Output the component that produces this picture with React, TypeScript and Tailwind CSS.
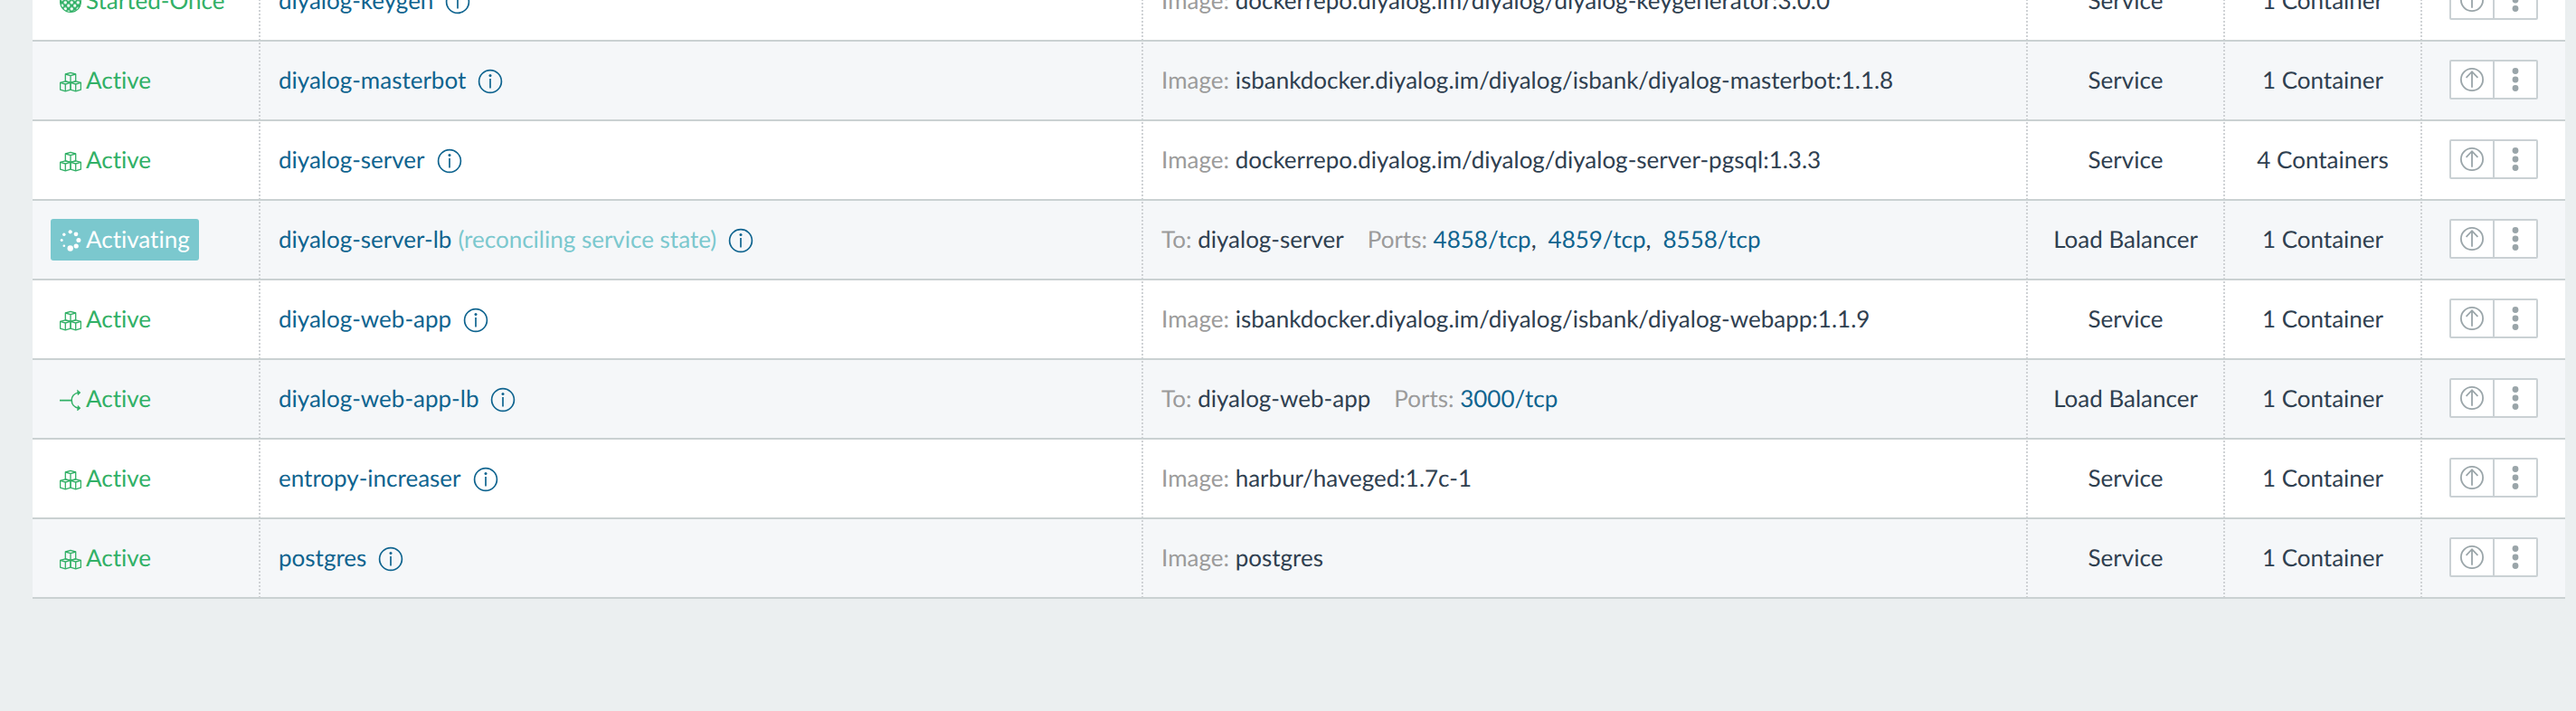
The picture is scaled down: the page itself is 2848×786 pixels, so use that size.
import React from "react";

type Status = "started" | "active" | "activating" | "balancer";

interface Row {
  status: Status;
  label: string;
  name: string;
  note?: string;
  image?: string;
  to?: string;
  ports?: string[];
  kind: string;
  scale: string;
}

const rows: Row[] = [
  { status: "started", label: "Started-Once", name: "diyalog-keygen", image: "dockerrepo.diyalog.im/diyalog/diyalog-keygenerator:3.0.0", kind: "Service", scale: "1 Container" },
  { status: "active", label: "Active", name: "diyalog-masterbot", image: "isbankdocker.diyalog.im/diyalog/isbank/diyalog-masterbot:1.1.8", kind: "Service", scale: "1 Container" },
  { status: "active", label: "Active", name: "diyalog-server", image: "dockerrepo.diyalog.im/diyalog/diyalog-server-pgsql:1.3.3", kind: "Service", scale: "4 Containers" },
  { status: "activating", label: "Activating", name: "diyalog-server-lb", note: "(reconciling service state)", to: "diyalog-server", ports: ["4858/tcp", "4859/tcp", "8558/tcp"], kind: "Load Balancer", scale: "1 Container" },
  { status: "active", label: "Active", name: "diyalog-web-app", image: "isbankdocker.diyalog.im/diyalog/isbank/diyalog-webapp:1.1.9", kind: "Service", scale: "1 Container" },
  { status: "balancer", label: "Active", name: "diyalog-web-app-lb", to: "diyalog-web-app", ports: ["3000/tcp"], kind: "Load Balancer", scale: "1 Container" },
  { status: "active", label: "Active", name: "entropy-increaser", image: "harbur/haveged:1.7c-1", kind: "Service", scale: "1 Container" },
  { status: "active", label: "Active", name: "postgres", image: "postgres", kind: "Service", scale: "1 Container" },
];

function Cube({ x, y }: { x: number; y: number }) {
  return (
    <g transform={`translate(${x} ${y})`}>
      <path d="M0 1.8 5.7 0.2 11.4 1.8V9.6L5.7 11.2 0 9.6Z" />
      <path d="M0 1.8 5.7 3.4 11.4 1.8M5.7 3.4V11.2" />
    </g>
  );
}

function StatusIcon({ status }: { status: Status }) {
  if (status === "active") {
    return (
      <svg className="mt-1 size-6" viewBox="0 0 24 24" fill="none" stroke="currentColor" strokeWidth="1.3" strokeLinejoin="round" aria-hidden="true">
        <Cube x={6.3} y={2.2} />
        <Cube x={0.6} y={11.6} />
        <Cube x={12} y={11.6} />
      </svg>
    );
  }
  if (status === "balancer") {
    return (
      <svg className="mt-1 size-6" viewBox="0 0 24 24" fill="none" stroke="currentColor" strokeWidth="1.6" aria-hidden="true">
        <path d="M0 12.6H13M21 4C10.6 5.5 10.6 19.7 21 21.2" />
        <path d="M19.5 1.2 23 4 20.2 6.8ZM20.2 18.4 23 21.2 19.5 24Z" fill="currentColor" strokeWidth="0.6" />
      </svg>
    );
  }
  if (status === "activating") {
    return (
      <svg className="mt-1 size-6" viewBox="0 0 24 24" fill="currentColor" aria-hidden="true">
        <circle cx="11.7" cy="2.3" r="2.1" />
        <circle cx="18" cy="4.8" r="2.4" />
        <circle cx="20.9" cy="11.5" r="2.5" />
        <circle cx="18.2" cy="18" r="2.6" />
        <circle cx="11.7" cy="20.5" r="3.2" />
        <circle cx="4.8" cy="17.8" r="1.3" />
        <circle cx="2.2" cy="11.5" r="1.5" />
        <circle cx="4.8" cy="5.2" r="1.7" />
      </svg>
    );
  }
  return (
    <svg className="mt-1 size-6" viewBox="0 0 24 24" aria-hidden="true">
      <defs>
        <pattern id="dots" x="1" y="0.5" width="7" height="7" patternUnits="userSpaceOnUse">
          <circle cx="1.75" cy="1.75" r="1.7" fill="white" />
          <circle cx="5.25" cy="5.25" r="1.7" fill="white" />
        </pattern>
      </defs>
      <circle cx="12" cy="12" r="12" fill="currentColor" />
      <circle cx="12" cy="12" r="10.8" fill="url(#dots)" />
    </svg>
  );
}

function InfoIcon() {
  return (
    <svg className="size-7" viewBox="0 0 28 28" fill="none" stroke="currentColor" strokeWidth="1.7" aria-hidden="true">
      <circle cx="14" cy="14" r="12.4" />
      <path d="M14 11V21.5" />
      <circle cx="14" cy="7.5" r="1.5" fill="currentColor" stroke="none" />
    </svg>
  );
}

function Cell({ children, className }: { children: React.ReactNode; className: string }) {
  return (
    <td
      className={`h-[88px] border-b-2 border-[#cad1d2] bg-[linear-gradient(to_bottom,#cfd2d5_50%,transparent_50%)] bg-[length:2px_4px] bg-right bg-repeat-y ${className}`}
    >
      {children}
    </td>
  );
}

const link = "text-[#0f648f]";

export default function App() {
  return (
    <main className="h-screen overflow-hidden bg-[#ebeff0] pr-3 pl-9 font-['Lato',sans-serif] text-[26px] leading-9 text-[#2f4050] [font-variant-ligatures:none] [text-rendering:geometricPrecision]">
      <table className="-mt-[42px] w-full table-fixed border-separate border-spacing-0 whitespace-nowrap">
        <colgroup>
          <col className="w-[252px]" />
          <col className="w-[34.86%]" />
          <col />
          <col className="w-[218px]" />
          <col className="w-[218px]" />
          <col className="w-[158px]" />
        </colgroup>
        <tbody>
          {rows.map((r) => (
            <tr key={r.name} className="bg-white even:bg-[#f5f7f9]">
              <Cell className="p-0 pl-5">
                <div
                  className={`flex h-[46px] w-fit items-center gap-[5px] rounded-[3px] px-[10px] pb-0.5 ${
                    r.status === "activating" ? "bg-[#7bc8ce] text-white" : "text-[#31b066]"
                  }`}
                >
                  <StatusIcon status={r.status} />
                  {r.label}
                </div>
              </Cell>
              <Cell className="p-0 pb-0.5 pl-5">
                <div className="flex items-center">
                  <a href="#" className={link}>{r.name}</a>
                  {r.note && <span className="ml-[7px] text-[#7bc8ce]">{r.note}</span>}
                  <button type="button" aria-label={`Details of ${r.name}`} className={`mt-1 ml-[13px] ${link}`}>
                    <InfoIcon />
                  </button>
                </div>
              </Cell>
              <Cell className="p-0 pb-0.5 pl-5">
                {r.image && (
                  <>
                    <span className="text-[#9b9b9b]">Image:</span> {r.image}
                  </>
                )}
                {r.to && (
                  <>
                    <span className="text-[#9b9b9b]">To:</span> {r.to}
                    <span className="ml-[26px] text-[#9b9b9b]">Ports:</span>{" "}
                    {r.ports?.map((p, i) => (
                      <React.Fragment key={p}>
                        {i > 0 && <span className="mr-[13px]">,</span>}
                        <a href="#" className={link}>{p}</a>
                      </React.Fragment>
                    ))}
                  </>
                )}
              </Cell>
              <Cell className="p-0 pr-0.5 pb-0.5 text-center">{r.kind}</Cell>
              <Cell className="p-0 pr-0.5 pb-0.5 text-center">{r.scale}</Cell>
              <td className="h-[88px] border-b-2 border-[#cad1d2] p-0 pb-0.5 pl-[30px]">
                <div className="flex h-11 w-[98px] rounded-[2px] border-2 border-[#cad1d4] bg-white text-[#9aa5a9]">
                  <button type="button" aria-label={`Upgrade ${r.name}`} className="flex w-12 items-center justify-center border-r-2 border-[#cad1d4]">
                    <svg className="size-[26px]" viewBox="0 0 26 26" fill="none" stroke="currentColor" strokeWidth="1.8" aria-hidden="true">
                      <circle cx="13" cy="13" r="12.1" />
                      <path d="M13 21.800V4M6.6 10.8 13 4.2 19.4 10.8" />
                    </svg>
                  </button>
                  <button type="button" aria-label={`Actions for ${r.name}`} className="flex flex-1 items-center justify-center">
                    <svg className="size-[26px]" viewBox="0 0 26 26" fill="currentColor" aria-hidden="true">
                      <circle cx="13" cy="3.5" r="3.4" />
                      <circle cx="13" cy="13" r="3.4" />
                      <circle cx="13" cy="22.5" r="3.4" />
                    </svg>
                  </button>
                </div>
              </td>
            </tr>
          ))}
        </tbody>
      </table>
    </main>
  );
}
